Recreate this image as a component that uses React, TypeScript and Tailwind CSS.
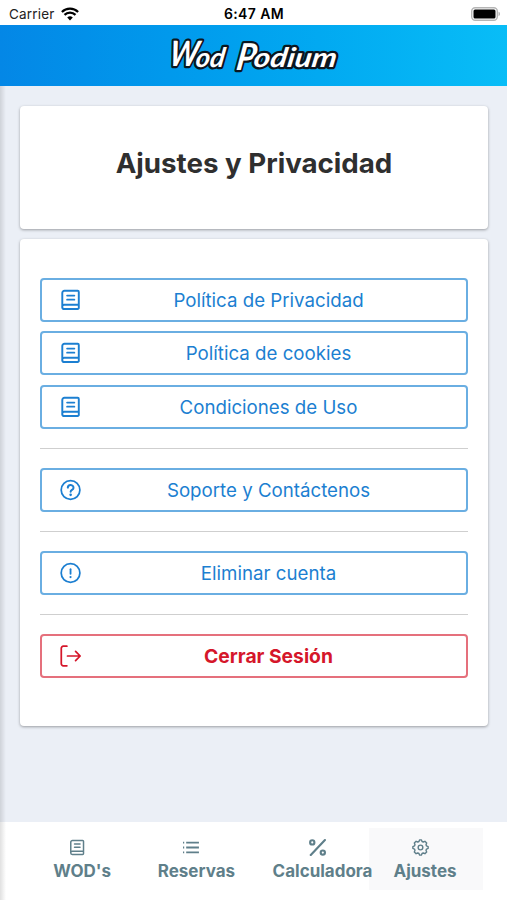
import React from 'react';

type IconProps = { className?: string };

const BookIcon: React.FC<IconProps> = ({ className }) => (
  <svg viewBox="0 0 24 24" fill="none" stroke="currentColor" strokeWidth="2.100" strokeLinecap="round" strokeLinejoin="round" className={className}>
    <path d="M20.500 17.200H4.700a2.300 2.300 0 0 0 0 4.600h14.600a1.200 1.200 0 0 0 1.200-1.200V3.200a1.200 1.200 0 0 0-1.200-1.200H4.900A2.400 2.400 0 0 0 2.500 4.400v15" />
    <path d="M7.800 7.200h7.800M7.800 11.600h7.800" />
  </svg>
);

const QuestionIcon: React.FC<IconProps> = ({ className }) => (
  <svg viewBox="0 0 24 24" fill="none" stroke="currentColor" strokeWidth="1.9" strokeLinecap="round" strokeLinejoin="round" className={className}>
    <circle cx="11.500" cy="12" r="10.200" />
    <path d="M8.500 9.400a3.100 3.100 0 0 1 6.200.4c0 2-3.100 2.200-3.100 4" strokeWidth="2.200" />
    <circle cx="11.600" cy="17.300" r="1.400" fill="currentColor" stroke="none" />
  </svg>
);

const AlertIcon: React.FC<IconProps> = ({ className }) => (
  <svg viewBox="0 0 24 24" fill="none" stroke="currentColor" strokeWidth="1.9" strokeLinecap="round" className={className}>
    <circle cx="11.500" cy="12" r="10.200" />
    <path d="M11.500 7.800v5" strokeWidth="2" />
    <circle cx="11.500" cy="16.400" r="1.200" fill="currentColor" stroke="none" />
  </svg>
);

const LogoutIcon: React.FC<IconProps> = ({ className }) => (
  <svg viewBox="0 0 24 24" fill="none" stroke="currentColor" strokeWidth="1.9" strokeLinecap="round" strokeLinejoin="round" className={className}>
    <path d="M7.500 1.300H3.600A2.200 2.200 0 0 0 1.400 3.500v17a2.200 2.200 0 0 0 2.200 2.200h3.900" />
    <path d="M8.200 12h13.600M17 6.900 22 12l-5 5.100" />
  </svg>
);

const ListIcon: React.FC<IconProps> = ({ className }) => (
  <svg viewBox="0 0 24 24" fill="none" stroke="currentColor" strokeWidth="2.500" className={className}>
    <path d="M4.500 5H22.500M4.500 12H22.500M4.500 19H22.500M-1 5h2.700M-1 12h2.700M-1 19h2.700" />
  </svg>
);

const PercentIcon: React.FC<IconProps> = ({ className }) => (
  <svg viewBox="0 0 24 24" fill="none" stroke="currentColor" strokeWidth="3" strokeLinecap="round" className={className}>
    <path d="M22.500 1.500 2.500 22.500" />
    <circle cx="4.600" cy="4.800" r="3" />
    <circle cx="19.500" cy="19.200" r="3" />
  </svg>
);

const GearIcon: React.FC<IconProps> = ({ className }) => (
  <svg viewBox="0 0 24 24" fill="none" stroke="currentColor" strokeWidth="2" strokeLinejoin="round" className={className}>
    <path d="M9.800 3.500 10.800 1.200h2.400l1 2.300 1.700.7 2.300-.9 2.500 2.500-.9 2.300.7 1.700 2.300 1v2.400l-2.300 1-.7 1.700.9 2.300-2.500 2.500-2.300-.9-1.700.7-1 2.300h-2.400l-1-2.300-1.700-.7-2.300.9-2.500-2.500.9-2.300-.7-1.700-2.300-1v-2.400l2.300-1 .7-1.700-.9-2.300 2.500-2.500 2.300.9z" />
    <circle cx="12" cy="12" r="3.300" />
  </svg>
);

const StatusBar = () => (
  <div className="grid h-[25px] grid-cols-3 items-center bg-white pt-[2px] pr-[6px] pl-[9px] text-[14px] text-black">
    <div className="flex items-center gap-[6px]">
      <span className="pt-px text-[13.500px] tracking-[0.2px] text-[#222]">Carrier</span>
      <svg viewBox="0 0 18 14" className="h-[14px] w-[18px]">
        <path d="M9 13.500 6.200 10.500a4 4 0 0 1 5.600 0z" fill="#000" />
        <path d="M3.500 7.900a7.800 7.800 0 0 1 11 0M.900 5a11.500 11.500 0 0 1 16.200 0" fill="none" stroke="#000" strokeWidth="2.200" />
      </svg>
    </div>
    <span className="-ml-[2px] text-center font-semibold tracking-[0.4px] whitespace-nowrap">6:47 AM</span>
    <svg viewBox="0 0 30 14" className="h-[14px] w-[30px] justify-self-end">
      <rect x=".7" y=".7" width="25.600" height="12.600" rx="3.500" fill="#fff" stroke="#b5b5b5" strokeWidth="1.400" />
      <rect x="2.500" y="2.500" width="22" height="9" rx="1.500" fill="#000" />
      <path d="M27.500 4.800c2 .5 2 3.900 0 4.400z" fill="#b5b5b5" />
    </svg>
  </div>
);

const Header = () => (
  <header className="flex h-[61px] items-center justify-center bg-linear-to-r from-[#0487e6] to-[#09bdf7]">
    <svg viewBox="0 0 172 44" className="h-[44px] w-[172px] overflow-visible">
      <g
        transform="translate(5 0) skewX(-9)"
        fill="#fff"
        stroke="#0b1620"
        strokeWidth="4.500"
        strokeLinejoin="round"
        paintOrder="stroke"
        className="font-['Lato',sans-serif] text-[27px] font-bold italic"
      >
        <text x="0" y="32" className="text-[35px]" textLength="29" lengthAdjust="spacingAndGlyphs">W</text>
        <text x="27" y="33" textLength="29" lengthAdjust="spacingAndGlyphs">od</text>
        <text x="68" y="36" className="text-[37px]" textLength="19" lengthAdjust="spacingAndGlyphs">P</text>
        <text x="85" y="33" textLength="83" lengthAdjust="spacingAndGlyphs">odium</text>
      </g>
    </svg>
  </header>
);

type ActionProps = { icon: React.FC<IconProps>; label: string; danger?: boolean };

const ActionButton: React.FC<ActionProps> = ({ icon: Icon, label, danger }) => (
  <button
    className={`flex h-[44px] w-full items-center rounded-[4px] border-2 pr-[18px] pl-[18px] ${
      danger
        ? 'border-[#e5707c] text-[19.300px] font-bold text-[#d5162a]'
        : 'border-[#6aaee2] text-[18.700px] text-[#1c7fd1]'
    }`}
  >
    <Icon className="mr-[7px] h-[22px] w-[22px] shrink-0" />
    <span className="flex-1 pt-[2px] text-center">{label}</span>
  </button>
);

const Divider = () => <hr className="my-[19px] border-t border-[#cfcfcf]" />;

const tabs = [
  { icon: BookIcon, label: "WOD's" },
  { icon: ListIcon, label: 'Reservas' },
  { icon: PercentIcon, label: 'Calculadora' },
  { icon: GearIcon, label: 'Ajustes', active: true },
];

const TabBar = () => (
  <nav className="flex h-[78px] bg-white pt-[6px] pl-[26px]">
    {tabs.map(({ icon: Icon, label, active }) => (
      <div
        key={label}
        className={`flex h-[62px] w-[114.300px] justify-center px-[17px] pt-[11px] text-[17px] leading-[20px] font-bold text-[#5f7f8a] ${
          active ? 'bg-[#f9f9fa]' : ''
        }`}
      >
        {/* long labels run past the right padding, over the next tab */}
        <div className="relative z-10 flex min-w-0 flex-col items-center">
          <Icon className={`h-[17px] w-[17px] shrink-0 ${label === 'Calculadora' ? '-mr-[12px]' : 'mr-[11px]'}`} />
          <span className={`mt-[5px] ${label === 'Calculadora' ? 'w-full pl-px' : '-ml-[2px]'}`}>{label}</span>
        </div>
      </div>
    ))}
  </nav>
);

const card = 'rounded-[4px] bg-white shadow-[0_1px_3px_rgba(0,0,0,0.35)]';

const App = () => {
  return (
    <div className="relative flex h-[900px] w-[507px] flex-col overflow-hidden bg-[#ebeff6] font-['Inter',sans-serif]">
      <StatusBar />
      <Header />
      <main className="flex flex-1 flex-col gap-[10px] pt-[20px] pr-[19px] pl-[20px]">
        <section className={`flex h-[123px] justify-center pt-[39px] ${card}`}>
          <h1 className="text-[27.700px] leading-[36px] font-bold text-[#2f2f2f]">Ajustes y Privacidad</h1>
        </section>
        <section className={`h-[487px] px-[20px] pt-[39px] ${card}`}>
          <div className="flex flex-col gap-[9.300px]">
            <ActionButton icon={BookIcon} label="Política de Privacidad" />
            <ActionButton icon={BookIcon} label="Política de cookies" />
            <ActionButton icon={BookIcon} label="Condiciones de Uso" />
          </div>
          <Divider />
          <ActionButton icon={QuestionIcon} label="Soporte y Contáctenos" />
          <Divider />
          <ActionButton icon={AlertIcon} label="Eliminar cuenta" />
          <Divider />
          <ActionButton icon={LogoutIcon} label="Cerrar Sesión" danger />
        </section>
      </main>
      <TabBar />
      {/* edge shadow of the closed side menu */}
      <div className="pointer-events-none absolute top-[86px] bottom-0 left-0 w-[6px] bg-linear-to-r from-black/12 to-transparent" />
    </div>
  );
};

export default App;
